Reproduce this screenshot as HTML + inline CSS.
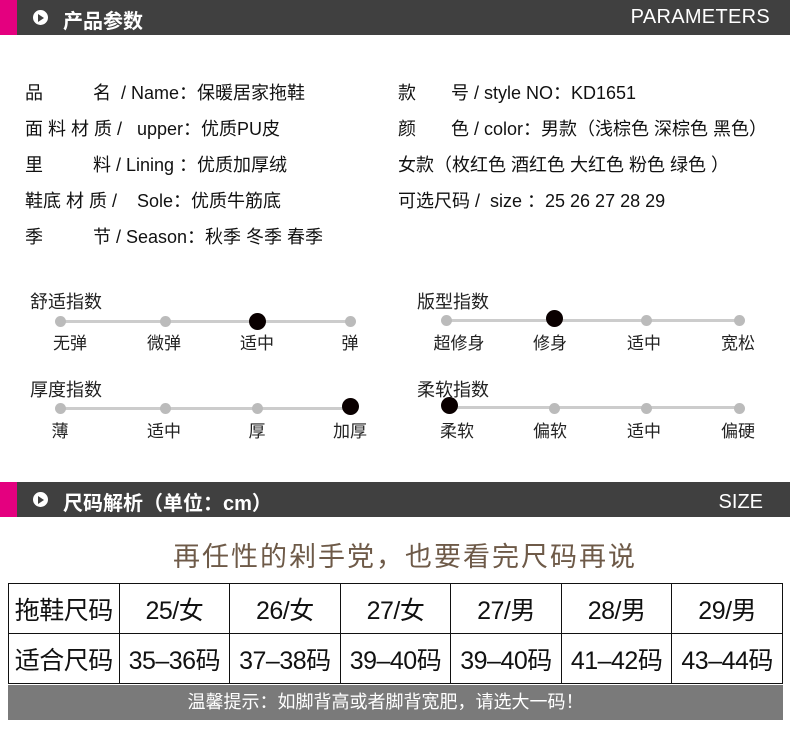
<!DOCTYPE html>
<html><head><meta charset="utf-8"><style>
*{margin:0;padding:0;box-sizing:border-box}
body{width:790px;height:747px;background:#fff;position:relative;overflow:hidden;font-family:"Liberation Sans","Noto Sans CJK SC",sans-serif;color:#111}
.a{position:absolute;white-space:nowrap}
.bar{position:absolute;left:0;width:790px;height:35px;background:#404040}
.pink{position:absolute;left:0;top:0;width:17px;height:35px;background:#e4007f}
.ic{position:absolute;left:33px;top:10px;width:15px;height:15px;border-radius:50%;background:#fff}
.ic:after{content:"";position:absolute;left:5px;top:3.5px;border-left:6px solid #404040;border-top:4px solid transparent;border-bottom:4px solid transparent}
.bt{position:absolute;left:63px;top:5px;color:#fff;font-size:20px;font-weight:bold}
.p{font-size:18px;color:#111}
.line{position:absolute;height:3px;background:#ccc}
.d{position:absolute;width:11px;height:11px;border-radius:50%;background:#bbb;margin:-5.5px 0 0 -5.5px}
.D{position:absolute;width:17px;height:17px;border-radius:50%;background:#0a0000;margin:-8.5px 0 0 -8.5px}
.t{font-size:18px;color:#222}
.l{font-size:17px;color:#222;transform:translateX(-50%)}
table{position:absolute;left:8px;top:583px;border-collapse:collapse;width:775px}
td{border:1.5px solid #111;height:50px;text-align:center;font-size:25px;width:110.7px;padding:0;color:#111;letter-spacing:-0.5px}
</style></head><body>
<div class="bar" style="top:0"><div class="pink"></div><div class="ic"></div><div class="bt">产品参数</div>
<div class="a" style="right:20px;top:6px;color:#fff;font-size:20px;letter-spacing:0.3px">PARAMETERS</div></div>

<div class="a p" style="left:25px;top:79px">品<span style="display:inline-block;width:50px"></span>名&nbsp;&nbsp;/ Name：保暖居家拖鞋</div>
<div class="a p" style="left:25px;top:115px">面 料 材 质 /&nbsp;&nbsp;&nbsp;upper：优质PU皮</div>
<div class="a p" style="left:25px;top:151px">里<span style="display:inline-block;width:50px"></span>料 / Lining ：优质加厚绒</div>
<div class="a p" style="left:25px;top:187px">鞋底 材 质 /&nbsp;&nbsp;&nbsp;&nbsp;Sole：优质牛筋底</div>
<div class="a p" style="left:25px;top:223px">季<span style="display:inline-block;width:50px"></span>节 / Season：秋季 冬季 春季</div>
<div class="a p" style="left:398px;top:79px">款<span style="display:inline-block;width:35px"></span>号 / style NO：KD1651</div>
<div class="a p" style="left:398px;top:115px">颜<span style="display:inline-block;width:35px"></span>色 / color：男款（浅棕色 深棕色 黑色）</div>
<div class="a p" style="left:398px;top:151px">女款（枚红色 酒红色 大红色 粉色 绿色 ）</div>
<div class="a p" style="left:398px;top:187px">可选尺码 /&nbsp;&nbsp;size ：25 26 27 28 29</div>

<div class="a t" style="left:30px;top:288px">舒适指数</div>
<div class="line" style="left:60px;top:320px;width:290px"></div>
<div class="d" style="left:60px;top:321px"></div><div class="d" style="left:165px;top:321px"></div><div class="D" style="left:257px;top:321px"></div><div class="d" style="left:350px;top:321px"></div>
<div class="a l" style="left:70px;top:329px">无弹</div><div class="a l" style="left:164px;top:329px">微弹</div><div class="a l" style="left:257px;top:329px">适中</div><div class="a l" style="left:350px;top:329px">弹</div>

<div class="a t" style="left:30px;top:376px">厚度指数</div>
<div class="line" style="left:60px;top:407px;width:290px"></div>
<div class="d" style="left:60px;top:408px"></div><div class="d" style="left:165px;top:408px"></div><div class="d" style="left:257px;top:408px"></div><div class="D" style="left:350px;top:406px"></div>
<div class="a l" style="left:60px;top:417px">薄</div><div class="a l" style="left:164px;top:417px">适中</div><div class="a l" style="left:257px;top:417px">厚</div><div class="a l" style="left:350px;top:417px">加厚</div>

<div class="a t" style="left:417px;top:288px">版型指数</div>
<div class="line" style="left:446px;top:319px;width:293px"></div>
<div class="d" style="left:446px;top:320px"></div><div class="D" style="left:554px;top:318px"></div><div class="d" style="left:646px;top:320px"></div><div class="d" style="left:739px;top:320px"></div>
<div class="a l" style="left:459px;top:329px">超修身</div><div class="a l" style="left:550px;top:329px">修身</div><div class="a l" style="left:644px;top:329px">适中</div><div class="a l" style="left:738px;top:329px">宽松</div>

<div class="a t" style="left:417px;top:376px">柔软指数</div>
<div class="line" style="left:449px;top:406px;width:290px"></div>
<div class="D" style="left:449px;top:405px"></div><div class="d" style="left:554px;top:408px"></div><div class="d" style="left:646px;top:408px"></div><div class="d" style="left:739px;top:408px"></div>
<div class="a l" style="left:457px;top:417px">柔软</div><div class="a l" style="left:550px;top:417px">偏软</div><div class="a l" style="left:644px;top:417px">适中</div><div class="a l" style="left:738px;top:417px">偏硬</div>

<div class="bar" style="top:482px"><div class="pink"></div><div class="ic"></div><div class="bt">尺码解析（单位：cm）</div>
<div class="a" style="right:27px;top:9px;color:#fff;font-size:20px">SIZE</div></div>

<div class="a" style="left:0;width:810px;text-align:center;top:535px;font-size:27px;color:#6e5a48;letter-spacing:2px">再任性的剁手党，也要看完尺码再说</div>

<table>
<tr><td>拖鞋尺码</td><td>25/女</td><td>26/女</td><td>27/女</td><td>27/男</td><td>28/男</td><td>29/男</td></tr>
<tr><td>适合尺码</td><td>35–36码</td><td>37–38码</td><td>39–40码</td><td>39–40码</td><td>41–42码</td><td>43–44码</td></tr>
</table>
<div class="a" style="left:8px;top:685px;width:775px;height:35px;background:#7a7a7a;color:#fff;font-size:18px;text-align:center;line-height:35px;padding-right:20px">温馨提示：如脚背高或者脚背宽肥，请选大一码！</div>
</body></html>
